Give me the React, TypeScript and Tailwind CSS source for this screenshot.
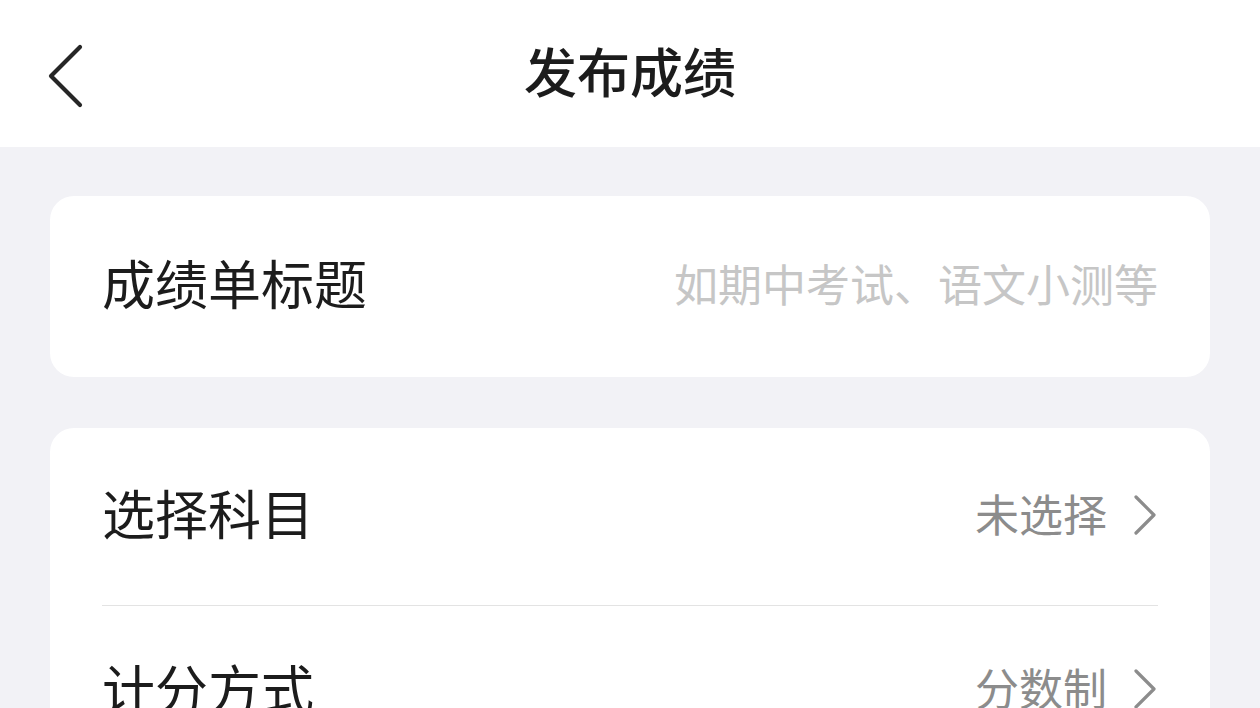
import React from "react";

const font = { fontFamily: '"Noto Sans CJK SC", "Noto Sans", sans-serif' };

function ChevronRight() {
  return (
    <svg width="26" height="42" viewBox="0 0 26 42" fill="none" className="mb-[4px] shrink-0">
      <path d="M4 3 L22 21 L4 39" stroke="#8c8c8c" strokeWidth="3.2" strokeLinecap="round" strokeLinejoin="round" />
    </svg>
  );
}

function Row({ label, value, h }: { label: string; value: string; h: string }) {
  return (
    <div className={`flex items-center justify-between ${h}`}>
      <span className="pb-[8px] text-[53px] leading-none text-[#1c1c1c]">{label}</span>
      <div className="flex items-center gap-[25px]">
        <span className="pb-[8px] text-[44px] leading-none text-[#8c8c8c]">{value}</span>
        <ChevronRight />
      </div>
    </div>
  );
}

export default function App() {
  return (
    <div className="h-[708px] w-[1260px] overflow-hidden bg-[#f2f2f6]" style={font}>
      <header className="relative flex h-[147px] items-center justify-center bg-white">
        <svg
          className="absolute left-[46px] top-[42px]"
          width="40"
          height="68"
          viewBox="0 0 40 68"
          fill="none"
        >
          <path d="M34 5 L5 34 L34 63" stroke="#262626" strokeWidth="4.2" strokeLinecap="round" strokeLinejoin="round" />
        </svg>
        <h1 className="pb-[6px] text-[53px] font-medium leading-none text-[#1c1c1c]">发布成绩</h1>
      </header>

      <main className="flex flex-col gap-[51px] px-[50px] pt-[49px]">
        <section className="flex h-[181px] items-center justify-between rounded-[24px] bg-white px-[52px]">
          <span className="pb-[8px] text-[53px] leading-none text-[#1c1c1c]">成绩单标题</span>
          <span className="pb-[8px] text-[44px] leading-none text-[#c6c6c6]">如期中考试、语文小测等</span>
        </section>

        <section className="rounded-[24px] bg-white px-[52px]">
          <Row label="选择科目" value="未选择" h="h-[177px]" />
          <div className="h-px bg-[#e3e3e3]" />
          <Row label="计分方式" value="分数制" h="h-[170px]" />
        </section>
      </main>
    </div>
  );
}
